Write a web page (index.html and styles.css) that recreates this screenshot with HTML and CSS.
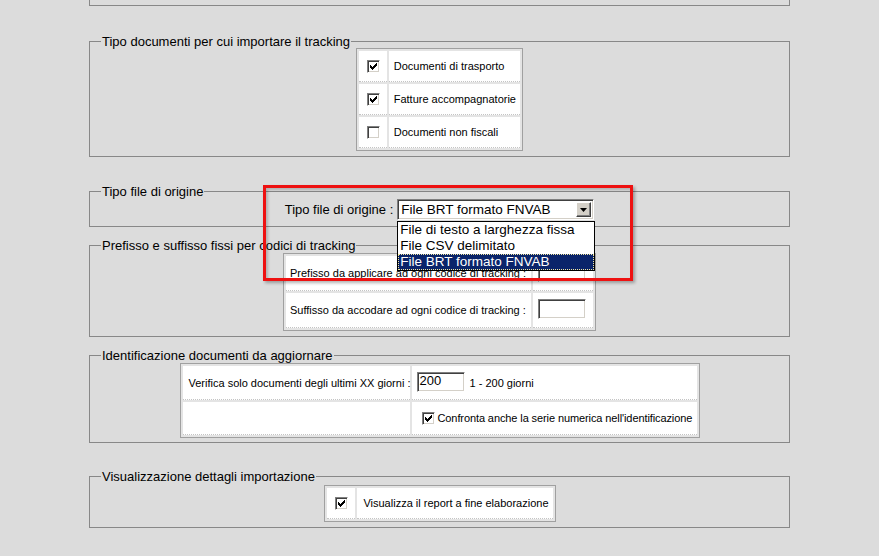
FILE: index.html
```html
<!DOCTYPE html>
<html lang="it">
<head>
    <meta charset="UTF-8">
    <title>Importazione tracking</title>
    <link rel="stylesheet" href="styles.css">
</head>
<body>
<div class="page">
    <div class="group-top"></div>

    <fieldset class="group g-docs">
        <legend>Tipo documenti per cui importare il tracking</legend>
        <table class="grid grid-docs">
            <tr>
                <td class="c-chk"><span class="chk on"></span></td>
                <td class="c-lbl">Documenti di trasporto</td>
            </tr>
            <tr>
                <td class="c-chk"><span class="chk on"></span></td>
                <td class="c-lbl">Fatture accompagnatorie</td>
            </tr>
            <tr>
                <td class="c-chk"><span class="chk"></span></td>
                <td class="c-lbl">Documenti non fiscali</td>
            </tr>
        </table>
    </fieldset>

    <fieldset class="group g-file">
        <legend>Tipo file di origine</legend>
        <div class="file-row">
            <span class="file-label">Tipo file di origine :</span>
            <div class="combo">
                <div class="combo-value">File BRT formato FNVAB</div>
                <div class="combo-btn">
                    <svg width="7" height="4" viewBox="0 0 7 4"><path d="M0 0H7L3.5 4Z" fill="#000"/></svg>
                </div>
                <ul class="combo-list">
                    <li>File di testo a larghezza fissa</li>
                    <li>File CSV delimitato</li>
                    <li class="sel">File BRT formato FNVAB</li>
                </ul>
            </div>
        </div>
    </fieldset>

    <fieldset class="group g-fix">
        <legend>Prefisso e suffisso fissi per codici di tracking</legend>
        <table class="grid grid-fix">
            <tr>
                <td class="c-txt">Prefisso da applicare ad ogni codice di tracking :</td>
                <td class="c-inp"><span class="box"></span></td>
            </tr>
            <tr>
                <td class="c-txt">Suffisso da accodare ad ogni codice di tracking :</td>
                <td class="c-inp"><span class="box"></span></td>
            </tr>
        </table>
    </fieldset>

    <fieldset class="group g-ident">
        <legend>Identificazione documenti da aggiornare</legend>
        <table class="grid grid-ident">
            <tr class="r1">
                <td class="c-txt">Verifica solo documenti degli ultimi XX giorni :</td>
                <td class="c-days"><span class="box">200</span><span class="hint">1 - 200 giorni</span></td>
            </tr>
            <tr class="r2">
                <td></td>
                <td class="c-serie"><span class="chk on"></span><span class="serie-lbl">Confronta anche la serie numerica nell'identificazione</span></td>
            </tr>
        </table>
    </fieldset>

    <fieldset class="group g-view">
        <legend>Visualizzazione dettagli importazione</legend>
        <table class="grid grid-view">
            <tr>
                <td class="c-chk"><span class="chk on"></span></td>
                <td class="c-lbl">Visualizza il report a fine elaborazione</td>
            </tr>
        </table>
    </fieldset>

    <div class="annot"></div>
</div>
</body>
</html>
```

FILE: styles.css
```css
*{
    margin: 0;
    padding: 0;
    box-sizing: border-box;
}
body{
    background: #dcdcdc;
    font-family: "Liberation Sans", Arial, sans-serif;
    color: #000;
    width: 879px;
    height: 556px;
    overflow: hidden;
}
.page{
    position: relative;
    width: 701px;
    margin-left: 89px;
}

/* group boxes */
.group-top{
    height: 6px;
    border: 1px solid #888;
    border-top: 0;
}
.group{
    border: 1px solid #888;
    min-width: 0;
}
.group legend{
    font-size: 13px;
    line-height: 15px;
    padding: 0 1px;
    margin-left: 11px;
}
.g-docs{
    margin-top: 28px;
    padding-bottom: 5px;
}
.g-file{
    margin-top: 27px;
    padding-bottom: 6px;
}
.g-fix{
    margin-top: 11px;
    padding-bottom: 5px;
}
.g-ident{
    margin-top: 11px;
    padding-bottom: 4px;
}
.g-view{
    margin-top: 26px;
    padding-bottom: 5px;
}

/* tables */
.grid{
    margin: 0 auto;
    border: 1px solid #a0a0a0;
    border-spacing: 2px;
    background: #e4e4e4;
    font-size: 11px;
}
.grid td{
    background: #fff;
    border-bottom: 1px dotted #c4c4c4;
    padding: 0;
    vertical-align: middle;
    white-space: nowrap;
}
.grid-docs{
    margin-top: -1px;
    width: 167px;
}
.grid-docs tr{
    height: 31px;
}
.c-chk{
    width: 31px;
    text-align: center;
}
.c-chk .chk{
    margin-left: 1px;
}
.c-lbl{
    padding-left: 5px !important;
    padding-right: 4px !important;
}
.grid-fix{
    width: 313px;
}
.grid-fix tr{
    height: 35px;
}
.c-txt{
    padding-left: 4px !important;
}
.c-inp{
    width: 60px;
    padding-left: 5px !important;
}
.grid-ident{
    width: 520px;
    table-layout: fixed;
}
.grid-ident .r1{
    height: 34px;
}
.grid-ident .r2{
    height: 33px;
}
.grid-ident .c-txt{
    width: 227px;
    padding-left: 6px !important;
}
.c-days{
    padding-left: 5px !important;
}
.c-days .box{
    vertical-align: middle;
    margin-top: -2px;
}
.hint{
    margin-left: 5px;
    vertical-align: middle;
}
.c-serie{
    padding-left: 10px !important;
}
.c-serie .chk{
    vertical-align: middle;
}
.serie-lbl{
    margin-left: 3px;
    vertical-align: middle;
    letter-spacing: -0.1px;
}
.grid-view{
    margin-top: 1px;
    width: 232px;
}
.grid-view tr{
    height: 31px;
}
.grid-view .c-lbl{
    padding-left: 6px !important;
}

/* classic controls */
.chk{
    display: inline-block;
    width: 13px;
    height: 13px;
    vertical-align: middle;
    border: 1px solid;
    border-color: #808080 #fff #fff #808080;
    background: #fff;
    box-shadow: inset 1px 1px #404040, inset -1px -1px #d4d0c8;
}
.chk.on{
    background: #fff url("data:image/svg+xml,%3Csvg xmlns='http://www.w3.org/2000/svg' width='11' height='11' shape-rendering='crispEdges'%3E%3Cpath d='M2 4h1v3H2zM3 5h1v3H3zM4 6h1v3H4zM5 5h1v3H5zM6 4h1v3H6zM7 3h1v3H7zM8 2h1v3H8z' fill='%23000'/%3E%3C/svg%3E") no-repeat 0 0;
}
.box{
    display: inline-block;
    width: 48px;
    height: 20px;
    border: 1px solid;
    border-color: #808080 #fff #fff #808080;
    box-shadow: inset 1px 1px #404040, inset -1px -1px #d4d0c8;
    background: #fff;
    font-size: 13px;
    line-height: 15px;
    padding-left: 2px;
}

/* combo */
.file-row{
    display: flex;
    justify-content: center;
    align-items: center;
    gap: 4px;
}
.file-label{
    font-size: 13px;
}
.combo{
    position: relative;
    display: flex;
    width: 197px;
    height: 21px;
    border: 1px solid;
    border-color: #808080 #fff #fff #808080;
    box-shadow: inset 1px 1px #404040, inset -1px -1px #d4d0c8;
    background: #fff;
    padding: 2px;
}
.combo-value{
    flex: 1;
    font-size: 13.5px;
    line-height: 16px;
    padding-left: 1px;
}
.combo-btn{
    width: 15px;
    height: 15px;
    background: #d4d0c8;
    border: 1px solid;
    border-color: #fff #404040 #404040 #fff;
    box-shadow: inset -1px -1px #808080;
    display: flex;
    align-items: center;
    justify-content: center;
}
.combo-list{
    position: absolute;
    left: -1px;
    top: 21px;
    width: 198px;
    border: 1px solid #000;
    background: #fff;
    list-style: none;
    font-size: 13.5px;
    z-index: 2;
}
.combo-list li{
    height: 16px;
    line-height: 16px;
    padding-left: 2px;
    white-space: nowrap;
}
.combo-list li.sel{
    background: #0a246a;
    color: #fff;
    outline: 1px dotted #f4e9a0;
    outline-offset: -1px;
}

/* red highlight drawn over the screenshot */
.annot{
    position: absolute;
    left: 174px;
    top: 185px;
    width: 370px;
    height: 96px;
    border: 3px solid #ee1111;
    box-shadow: 2px 2px 3px rgba(0,0,0,0.3), inset 2px 2px 3px rgba(0,0,0,0.2);
    z-index: 3;
}
```
